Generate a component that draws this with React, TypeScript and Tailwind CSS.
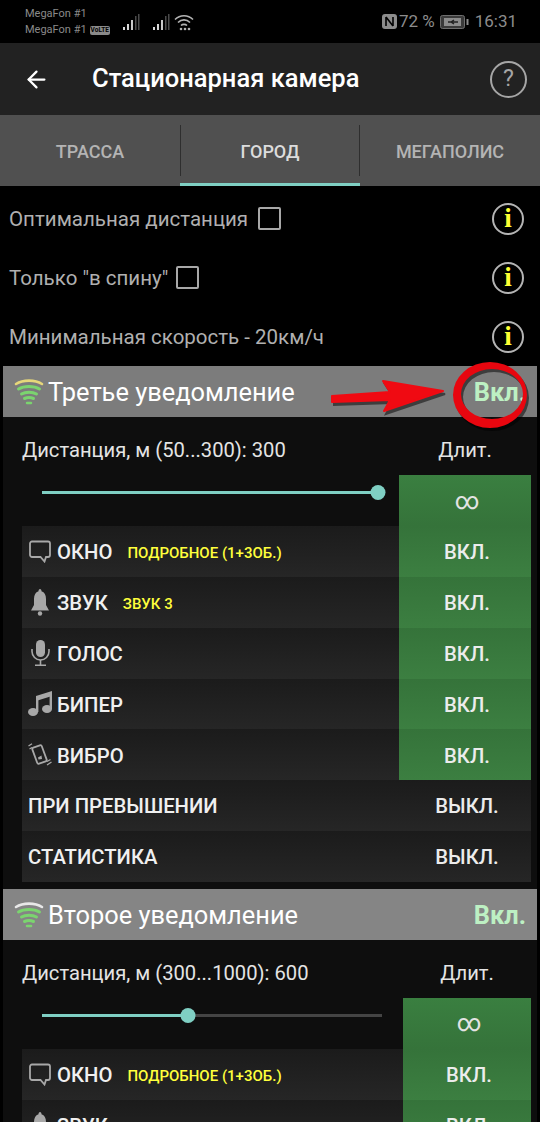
import { ArrowLeft } from 'lucide-react';
import type { ReactNode } from 'react';

function SignalBars() {
  return (
    <svg width="18" height="18" viewBox="0 0 18 18">
      <rect x="1" y="14" width="2" height="3" fill="#d8d8d8" />
      <rect x="5" y="11" width="2" height="6" fill="#d8d8d8" />
      <rect x="9" y="7" width="2" height="10" fill="#c8c8c8" />
      <rect x="13" y="3" width="1.5" height="14" fill="#4a4a4a" />
      <rect x="16" y="1" width="1.5" height="16" fill="#4a4a4a" />
    </svg>
  );
}

function StatusBar() {
  return (
    <div className="h-[43px] bg-black flex items-center pl-[25px] pr-[23px] text-[#8a8a8a] shrink-0">
      <div className="text-[11px] leading-[16px] w-[89px] pt-[1px]">
        <div>MegaFon #1</div>
        <div className="flex items-center gap-[3px] whitespace-nowrap">
          MegaFon #1
          <span className="bg-[#8a8a8a] text-black text-[6.5px] leading-[9px] font-bold rounded-[2px] px-[1px]">VoLTE</span>
        </div>
      </div>
      <div className="ml-[8px] flex items-center gap-[12px]">
        <SignalBars />
        <SignalBars />
      </div>
      <svg width="20" height="18" viewBox="0 0 20 18" className="ml-[4px]" fill="none" stroke="#b4b4b4">
        <path d="M1 6.5C6 1.5 14 1.5 19 6.5" strokeWidth="1.6" />
        <path d="M4 9.5C7.5 6 12.5 6 16 9.5" strokeWidth="1.6" />
        <path d="M7 12.5C8.5 11 11.5 11 13 12.5" strokeWidth="1.6" />
        <circle cx="7" cy="16" r="1.3" fill="#b4b4b4" stroke="none" />
        <circle cx="11" cy="16" r="1.3" fill="#b4b4b4" stroke="none" />
        <circle cx="15" cy="16" r="1.3" fill="#b4b4b4" stroke="none" />
      </svg>
      <div className="ml-auto flex items-center text-[17px] text-[#8c8c8c]">
        <svg width="15" height="15" viewBox="0 0 15 15" className="mr-[2px]">
          <rect x="0" y="0" width="15" height="15" rx="3" fill="#8c8c8c" />
          <path d="M4 3V12M4 3L11 12M11 3V12" stroke="#000" strokeWidth="1.6" fill="none" />
        </svg>
        <span>72 %</span>
        <svg width="29" height="14" viewBox="0 0 29 14" className="ml-[5px] mr-[6px]">
          <rect x="0.5" y="0.5" width="24" height="13" rx="2" fill="#3a3a3a" stroke="#6e6e6e" />
          <rect x="4" y="3" width="17" height="8" fill="#8c8c8c" />
          <path d="M8 7H18M14 5L11 7L14 9" stroke="#222" strokeWidth="1.4" fill="none" />
          <rect x="26.5" y="4" width="2" height="6" fill="#8c8c8c" />
        </svg>
        <span>16:31</span>
      </div>
    </div>
  );
}

function Header() {
  return (
    <div className="h-[72px] bg-[#222222] flex items-center pl-[23px] pr-[13px] shrink-0">
      <ArrowLeft size={27} color="#ffffff" strokeWidth={2} />
      <div className="ml-[42px] text-[25.5px] font-medium text-white leading-none">Стационарная камера</div>
      <div className="ml-auto w-[37px] h-[37px] rounded-full border-2 border-[#a6a6a6] flex items-center justify-center text-[23px] text-[#a6a6a6]">
        ?
      </div>
    </div>
  );
}

function Tabs() {
  return (
    <div className="h-[71px] bg-[#505050] flex shrink-0 text-[18px] font-medium">
      <div className="w-[180px] h-[68px] pt-[4px] flex items-center justify-center text-[#b4b4b4]">ТРАССА</div>
      <div className="w-[180px] relative pt-[4px] flex items-center justify-center text-[#dcdcdc] border-b-[3px] border-[#7fcfc3]">
        <div className="absolute left-0 top-[10px] bottom-[7px] w-px bg-[#2e2e2e]" />
        <div className="absolute right-0 top-[10px] bottom-[7px] w-px bg-[#2e2e2e]" />
        ГОРОД
      </div>
      <div className="w-[180px] h-[68px] pt-[4px] flex items-center justify-center text-[#b4b4b4]">МЕГАПОЛИС</div>
    </div>
  );
}

function OptionRow({ label, boxGap }: { label: string; boxGap?: string }) {
  return (
    <div className="h-[59px] flex items-center pl-[9px] pr-[16px] text-[20.5px] text-[#b0b0b0]">
      <span className="pt-[2px]">{label}</span>
      {boxGap && <span className={`${boxGap} w-[23px] h-[23px] border-[2.5px] border-[#a8a8a8] rounded-[2px]`} />}
      <div className="ml-auto w-[32px] h-[32px] rounded-full border-[2.5px] border-[#b4b4b4] flex items-center justify-center text-[27px] leading-none font-bold text-[#ffff33] [font-family:'Liberation_Serif',serif]">
        i
      </div>
    </div>
  );
}

function WifiIcon({ top }: { top: string }) {
  return (
    <svg width="30" height="27" viewBox="0 0 30 27" fill="none" strokeLinecap="round" className="shrink-0">
      <path d="M2 6C9 1.5 21 1.5 28 6" stroke={top} strokeWidth="2.6" />
      <path d="M4.5 11C10 7.5 20 7.5 25.5 11" stroke="#7bd46f" strokeWidth="3" />
      <path d="M7.5 16C11.5 13.5 18.5 13.5 22.5 16" stroke="#7bd46f" strokeWidth="3" />
      <path d="M10.5 20.5C13 19.5 17 19.5 19.5 20.5" stroke="#7bd46f" strokeWidth="3" />
      <path d="M13 25H17" stroke="#7bd46f" strokeWidth="2.5" />
    </svg>
  );
}

function BubbleIcon() {
  return (
    <svg width="22" height="23" viewBox="0 0 22 23" fill="none" stroke="#a8a8a8" strokeWidth="1.8">
      <path d="M3 1.5H19C20 1.5 21 2.5 21 3.5V15C21 16 20 17 19 17H17L15.5 21.5L11.5 17H3C2 17 1 16 1 15V3.5C1 2.5 2 1.5 3 1.5Z" />
    </svg>
  );
}

function BellIcon() {
  return (
    <svg width="18" height="27" viewBox="0 0 18 27" fill="#a8a8a8">
      <path d="M9 0C10 0 10.5 1 10.5 2.2C13.5 3.2 15 6 15 10V16L18 21.5H0L3 16V10C3 6 4.5 3.2 7.5 2.2C7.5 1 8 0 9 0Z" />
      <circle cx="9" cy="24.5" r="2.2" />
    </svg>
  );
}

function MicIcon() {
  return (
    <svg width="19" height="26" viewBox="0 0 19 26" fill="none" stroke="#a8a8a8" strokeWidth="1.6">
      <rect x="5" y="0" width="9" height="17" rx="4.5" fill="#a8a8a8" stroke="none" />
      <path d="M1 9V11.5A8.5 8.5 0 0 0 18 11.5V9" />
      <path d="M9.5 20V25M4 25.2H15" />
    </svg>
  );
}

function MusicIcon() {
  return (
    <svg width="24" height="25" viewBox="0 0 24 25" fill="#a8a8a8">
      <path d="M8 5L24 0V5L8 10Z" />
      <rect x="8" y="5" width="2.4" height="16" />
      <rect x="21.6" y="1" width="2.4" height="17" />
      <ellipse cx="5" cy="21" rx="5" ry="4" />
      <ellipse cx="19" cy="18" rx="5" ry="4" />
    </svg>
  );
}

function VibrateIcon() {
  return (
    <svg width="24" height="23" viewBox="0 0 24 23" fill="none" stroke="#a8a8a8">
      <rect x="6.5" y="3" width="10" height="17" rx="1.5" transform="rotate(-20 11.5 11.5)" strokeWidth="1.8" />
      <path d="M10 14.5L13.5 12.5L14 16L10.5 16.5Z" fill="#a8a8a8" stroke="none" />
      <path d="M0.5 3L4 0.8M1.5 6L4 4.5" strokeWidth="1.3" />
      <path d="M19 22L23.5 19M19 18.5L22.5 16.5" strokeWidth="1.3" />
    </svg>
  );
}

type RowProps = {
  icon?: ReactNode;
  label: string;
  note?: string;
  noteGap?: string;
  value: string;
  on?: boolean;
  valueWidth: string;
};

function Row({ icon, label, note, noteGap, value, on, valueWidth }: RowProps) {
  return (
    <div className="h-[50.85px] flex bg-gradient-to-b from-[#1b1b1b] to-[#262626]">
      <div className="flex-1 flex items-center text-[20.3px] font-medium text-[#f0f0f0] pl-[6px]">
        {icon && <span className="w-[24px] mr-[5px] flex items-center justify-center shrink-0">{icon}</span>}
        <span className="pt-[2px]">{label}</span>
        {note && <span className={`${noteGap} pt-[3px] text-[15px] font-medium text-[#ffff3c]`}>{note}</span>}
      </div>
      <div
        className={`${valueWidth} flex items-center justify-center pt-[2px] pl-[4px] text-[20.3px] font-medium text-[#ececec] ${
          on ? 'bg-gradient-to-b from-[#35733a] to-[#3c7f41]' : ''
        }`}
      >
        {value}
      </div>
    </div>
  );
}

function Section({
  title,
  topArc,
  headerBg,
  distance,
  percent,
  valueWidth,
  trackWidth,
  children,
}: {
  title: string;
  topArc: string;
  headerBg: string;
  distance: string;
  percent: number;
  valueWidth: string;
  trackWidth: number;
  children: ReactNode;
}) {
  return (
    <div className="mx-[3px] shrink-0">
      <div className={`h-[51px] ${headerBg} flex items-center pl-[11px] pr-[11px]`}>
        <WifiIcon top={topArc} />
        <span className="ml-[4px] pt-[1px] text-[25.4px] text-white">{title}</span>
        <span className="ml-auto pt-[1px] text-[25.4px] font-bold text-[#bdf0c3]">Вкл.</span>
      </div>
      <div className="bg-[#0e0e0e] pl-[19px] pr-[6px] pb-[7px]">
        <div className="h-[58px] flex items-center justify-between text-[20.2px] text-[#e4e4e4]">
          <span className="pt-[8px]">{distance}</span>
          <span className={`${valueWidth} text-center pt-[8px]`}>Длит.</span>
        </div>
        <div className="h-[51px] flex justify-between">
          <div className="pl-[20px] pt-[10px]">
            <div className="relative h-[15px] flex items-center" style={{ width: trackWidth }}>
              <div className="h-[3px] w-full bg-[#444444]" />
              <div className="absolute left-0 h-[3px] bg-[#7fcfc3]" style={{ width: `${percent}%` }} />
              <div
                className="absolute w-[15px] h-[15px] rounded-full bg-[#7fcfc3] -translate-x-1/2"
                style={{ left: `${percent}%` }}
              />
            </div>
          </div>
          <div className={`${valueWidth} bg-gradient-to-b from-[#3a7f40] to-[#35733a] flex items-center justify-center pl-[4px] text-[24px] text-[#e4e4e4]`}>
            ∞
          </div>
        </div>
        {children}
      </div>
    </div>
  );
}

// thick on the left, thin on the right, like a ring drawn by hand
const RING = 'M453 395a37 33 0 1 0 74 0a37 33 0 1 0 -74 0ZM461 394a31 25 0 1 0 62 0a31 25 0 1 0 -62 0Z';
const ARROW = 'M332 396L390 392L383 381L443 391L384 411L390 400L332 402Z';

export default function App() {
  return (
    <div className="relative w-[540px] h-[1122px] overflow-hidden bg-black flex flex-col [font-family:Roboto,sans-serif]">
      <StatusBar />
      <Header />
      <Tabs />
      <div className="pt-[3px] shrink-0">
        <OptionRow label="Оптимальная дистанция" boxGap="ml-[10px]" />
        <OptionRow label={'Только "в спину"'} boxGap="ml-[8px]" />
        <OptionRow label="Минимальная скорость - 20км/ч" />
      </div>
      <Section
        title="Третье уведомление"
        topArc="#e6d77a"
        headerBg="bg-[#7c7c7c]"
        distance="Дистанция, м (50...300): 300"
        percent={100}
        valueWidth="w-[132px]"
        trackWidth={336}
      >
        <Row icon={<BubbleIcon />} label="ОКНО" note="ПОДРОБНОЕ (1+3ОБ.)" noteGap="ml-[15px]" value="ВКЛ." on valueWidth="w-[132px]" />
        <Row icon={<BellIcon />} label="ЗВУК" note="ЗВУК 3" noteGap="ml-[15px]" value="ВКЛ." on valueWidth="w-[132px]" />
        <Row icon={<MicIcon />} label="ГОЛОС" value="ВКЛ." on valueWidth="w-[132px]" />
        <Row icon={<MusicIcon />} label="БИПЕР" value="ВКЛ." on valueWidth="w-[132px]" />
        <Row icon={<VibrateIcon />} label="ВИБРО" value="ВКЛ." on valueWidth="w-[132px]" />
        <Row label="ПРИ ПРЕВЫШЕНИИ" value="ВЫКЛ." valueWidth="w-[132px]" />
        <Row label="СТАТИСТИКА" value="ВЫКЛ." valueWidth="w-[132px]" />
      </Section>
      <Section
        title="Второе уведомление"
        topArc="#e8e8e8"
        headerBg="bg-[#858585]"
        distance="Дистанция, м (300...1000): 600"
        percent={43}
        valueWidth="w-[128px]"
        trackWidth={340}
      >
        <Row icon={<BubbleIcon />} label="ОКНО" note="ПОДРОБНОЕ (1+3ОБ.)" noteGap="ml-[15px]" value="ВКЛ." on valueWidth="w-[128px]" />
        <Row icon={<BellIcon />} label="ЗВУК" value="ВКЛ." on valueWidth="w-[128px]" />
      </Section>

      {/* red annotation drawn over the screenshot */}
      <svg className="absolute left-0 top-0 pointer-events-none" width="540" height="440" viewBox="0 0 540 440">
        <g transform="translate(2 3)" fill="#000" opacity="0.5">
          <path d={ARROW} stroke="#000" strokeWidth="2" />
          <path d={RING} fillRule="evenodd" />
        </g>
        <path d={ARROW} fill="#f00a12" stroke="#f00a12" strokeWidth="2" strokeLinejoin="round" />
        <path d={RING} fill="#e8060f" fillRule="evenodd" />
      </svg>
    </div>
  );
}
